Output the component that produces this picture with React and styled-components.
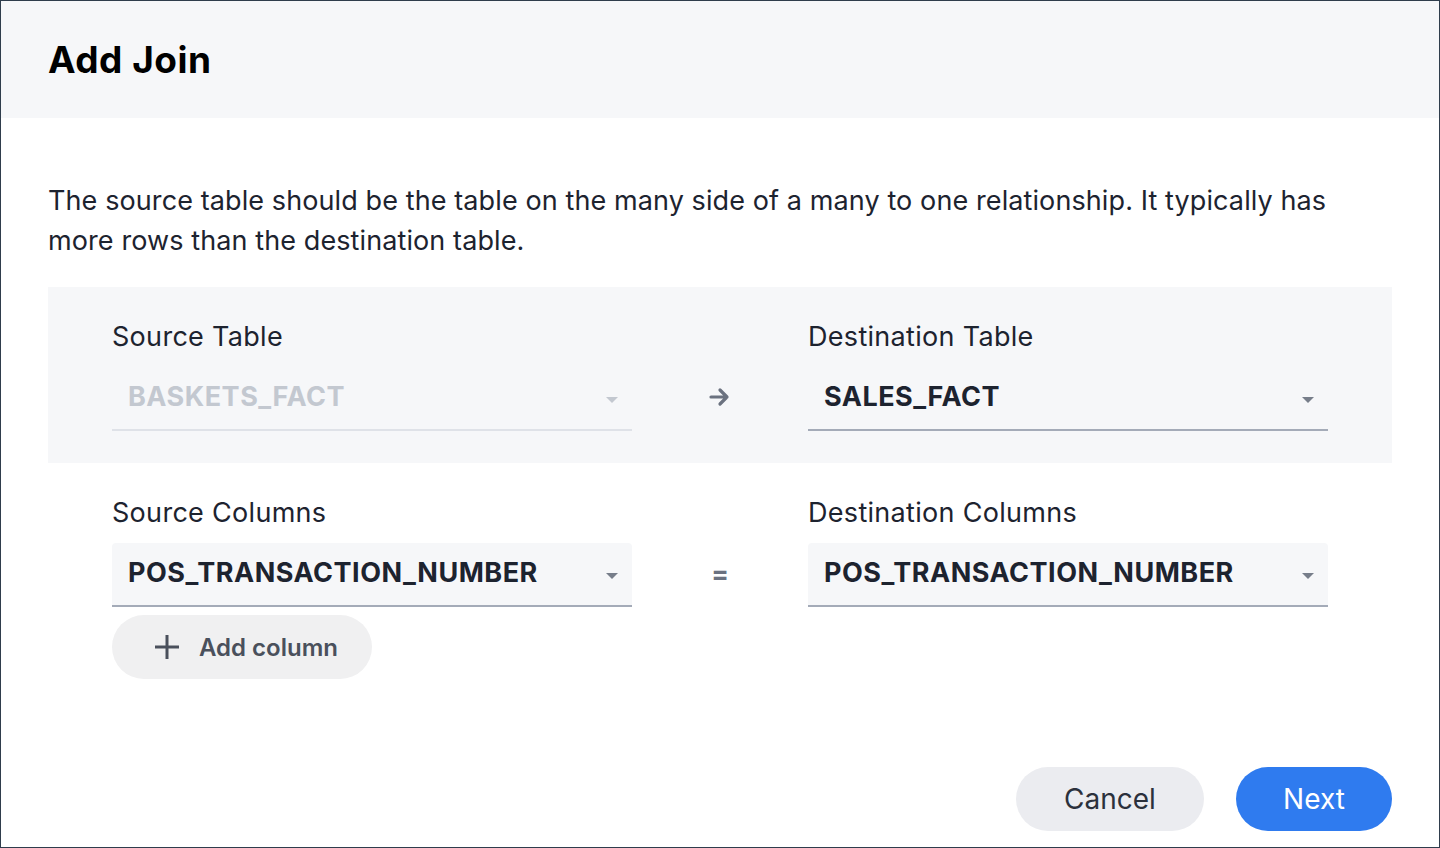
import React from "react";
import styled, { createGlobalStyle } from "styled-components";

const GlobalStyle = createGlobalStyle`
  html, body {
    margin: 0;
    padding: 0;
    background: #fff;
  }
  body {
    font-family: Inter, "Noto Sans", sans-serif;
    color: #1d232f;
  }
  * {
    box-sizing: border-box;
  }
`;

const Dialog = styled.div`
  width: 1440px;
  height: 848px;
  border: 1px solid #2f3d4c;
  background: #fff;
  display: flex;
  flex-direction: column;
`;

const Header = styled.div`
  height: 117px;
  background: #f6f7f9;
  display: flex;
  align-items: center;
  padding-left: 47px;
`;

const Title = styled.h1`
  margin: 0;
  font-size: 37px;
  font-weight: 700;
  color: #000;
  letter-spacing: 0.5px;
`;

const Body = styled.div`
  flex: 1;
  padding: 63px 47px 0 47px;
  display: flex;
  flex-direction: column;
`;

const Description = styled.p`
  margin: 0 0 26px 0;
  font-size: 27px;
  line-height: 40px;
  letter-spacing: 0.1px;
  color: #1d232f;
`;

const Panel = styled.div`
  background: ${(p) => (p.$shaded ? "#f6f7f9" : "transparent")};
  padding: ${(p) => (p.$shaded ? "34px 64px 32px" : "34px 64px 0")};
  display: grid;
  grid-template-columns: 520px 1fr 520px;
  align-items: end;
`;

const Field = styled.div`
  display: flex;
  flex-direction: column;
`;

const Label = styled.div`
  font-size: 27px;
  line-height: 32px;
  letter-spacing: 0.3px;
  margin-bottom: 14px;
  color: #1d232f;
`;

const Select = styled.div`
  height: 64px;
  display: flex;
  align-items: center;
  justify-content: space-between;
  padding: 0 14px 3px 16px;
  background: ${(p) => (p.$filled ? "#f6f7f9" : "transparent")};
  border-bottom: 2px solid ${(p) => (p.$disabled ? "#dfe2e8" : "#a4abb8")};
  border-radius: 4px 4px 0 0;
`;

const SelectValue = styled.span`
  font-size: 27px;
  font-weight: 700;
  letter-spacing: 0.5px;
  color: ${(p) => (p.$disabled ? "#c3c8d0" : "#1d232f")};
`;

const Caret = styled.span`
  width: 0;
  height: 0;
  border-left: 6px solid transparent;
  border-right: 6px solid transparent;
  border-top: 6px solid ${(p) => (p.$disabled ? "#c3c8d0" : "#777e8a")};
  margin-top: 6px;
`;

const Connector = styled.div`
  height: 64px;
  display: flex;
  align-items: center;
  justify-content: center;
  padding-bottom: 4px;
  color: #6b7280;
  font-size: 26px;
  font-weight: 700;
`;

const AddColumn = styled.button`
  margin-top: 8px;
  width: 260px;
  height: 64px;
  border: none;
  border-radius: 32px;
  background: #f0f0f1;
  display: flex;
  align-items: center;
  gap: 19px;
  padding: 0 0 0 42px;
  font-family: inherit;
  font-size: 24px;
  font-weight: 600;
  color: #4a505c;
  cursor: pointer;
`;

const Footer = styled.div`
  margin-top: auto;
  padding: 0 47px 16px;
  display: flex;
  justify-content: flex-end;
  gap: 32px;
`;

const Button = styled.button`
  height: 64px;
  width: ${(p) => p.$width}px;
  border: none;
  border-radius: 32px;
  font-family: inherit;
  font-size: 28px;
  background: ${(p) => (p.$primary ? "#2f7bef" : "#ebecf0")};
  color: ${(p) => (p.$primary ? "#fff" : "#2b313c")};
  cursor: pointer;
`;

function Arrow() {
  return (
    <svg width="22" height="20" viewBox="0 0 22 20" fill="none">
      <path
        d="M2 10h16M11 3l7 7-7 7"
        stroke="#6b7280"
        strokeWidth="3.2"
        strokeLinecap="round"
        strokeLinejoin="round"
      />
    </svg>
  );
}

function Plus() {
  return (
    <svg width="26" height="26" viewBox="0 0 26 26">
      <path d="M13 1v24M1 13h24" stroke="#4a505c" strokeWidth="3" />
    </svg>
  );
}

export default function App() {
  return (
    <>
      <GlobalStyle />
      <Dialog>
        <Header>
          <Title>Add Join</Title>
        </Header>
        <Body>
          <Description>
            The source table should be the table on the many side of a many to
            one relationship. It typically has more rows than the destination
            table.
          </Description>

          <Panel $shaded>
            <Field>
              <Label>Source Table</Label>
              <Select $disabled>
                <SelectValue $disabled>BASKETS_FACT</SelectValue>
                <Caret $disabled />
              </Select>
            </Field>
            <Connector>
              <Arrow />
            </Connector>
            <Field>
              <Label>Destination Table</Label>
              <Select>
                <SelectValue>SALES_FACT</SelectValue>
                <Caret />
              </Select>
            </Field>
          </Panel>

          <Panel>
            <Field>
              <Label>Source Columns</Label>
              <Select $filled>
                <SelectValue>POS_TRANSACTION_NUMBER</SelectValue>
                <Caret />
              </Select>
            </Field>
            <Connector>=</Connector>
            <Field>
              <Label>Destination Columns</Label>
              <Select $filled>
                <SelectValue>POS_TRANSACTION_NUMBER</SelectValue>
                <Caret />
              </Select>
            </Field>
            <AddColumn>
              <Plus />
              Add column
            </AddColumn>
          </Panel>
        </Body>
        <Footer>
          <Button $width={188}>Cancel</Button>
          <Button $primary $width={156}>
            Next
          </Button>
        </Footer>
      </Dialog>
    </>
  );
}
